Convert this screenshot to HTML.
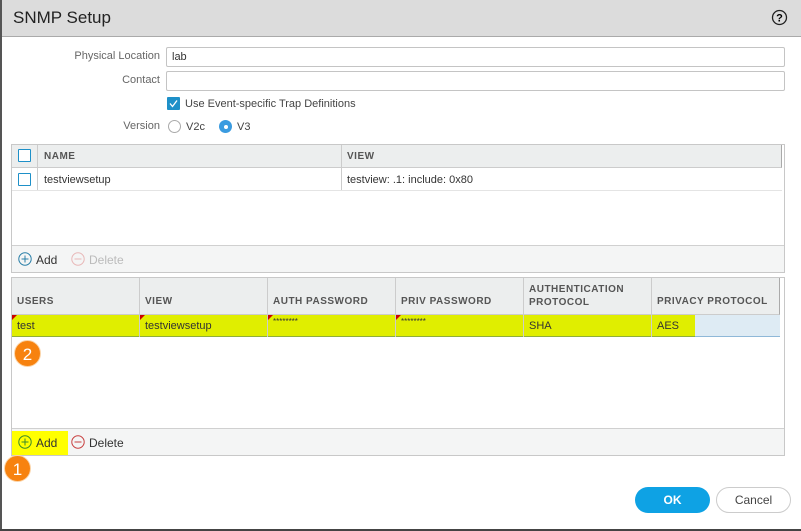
<!DOCTYPE html>
<html><head><meta charset="utf-8"><style>
*{box-sizing:border-box;margin:0;padding:0}
body{width:801px;height:531px;position:relative;overflow:hidden;background:#fff;font-family:"Liberation Sans",sans-serif;font-size:11px;color:#333}
.a{position:absolute}
.lbl{position:absolute;color:#666;font-size:11px;text-align:right;width:150px;left:10px}
.inp{position:absolute;left:166px;width:619px;height:20px;border:1px solid #c4c4c4;border-radius:2px;padding:3px 5px;font-size:11px}
.th{position:absolute;font-size:10px;font-weight:bold;color:#555;letter-spacing:.5px}
.cb{position:absolute;width:13px;height:13px;border:1.5px solid #1e90c8;border-radius:1px;background:#fff}
.vl{position:absolute;width:1px;background:#ccc}
.badge{position:absolute;width:27px;height:27px;border-radius:50%;background:#f7820f;color:#fff;font-size:17px;text-align:center;line-height:27px;border:1px solid #fbd4a8}
</style></head><body>
<div class="a" style="left:0;top:0;width:801px;height:37px;background:#dcdcdc;border-bottom:1px solid #aaa"></div>
<div class="a" style="left:0;top:0;width:2px;height:531px;background:#555"></div>
<div class="a" style="left:0;top:529px;width:801px;height:2px;background:#444"></div>
<div class="a" style="left:13px;top:8px;font-size:17px;color:#222">SNMP Setup</div>
<svg class="a" style="left:771px;top:9px" width="17" height="17"><circle cx="8.5" cy="8.5" r="7" fill="none" stroke="#222" stroke-width="1.3"/><text x="8.5" y="12.5" font-size="11" font-weight="bold" text-anchor="middle" font-family="Liberation Sans">?</text></svg>

<div class="lbl" style="top:50px">Physical Location</div>
<div class="inp" style="top:47px">lab</div>
<div class="lbl" style="top:74px">Contact</div>
<div class="inp" style="top:71px"></div>
<div class="a" style="left:167px;top:97px;width:13px;height:13px;background:#1e90c8;border-radius:1px"><svg width="13" height="13"><path d="M3 6.5l2.5 3 4.5-6" stroke="#fff" stroke-width="1.3" fill="none"/></svg></div>
<div class="a" style="left:185px;top:98px;color:#444">Use Event-specific Trap Definitions</div>
<div class="lbl" style="top:120px">Version</div>
<div class="a" style="left:168px;top:120px;width:13px;height:13px;border:1px solid #aaa;border-radius:50%"></div>
<div class="a" style="left:186px;top:121px;color:#444">V2c</div>
<div class="a" style="left:219px;top:120px;width:13px;height:13px;background:#3a9be0;border-radius:50%"><div style="position:absolute;left:4.5px;top:4.5px;width:4px;height:4px;background:#fff;border-radius:50%"></div></div>
<div class="a" style="left:237px;top:121px;color:#444">V3</div>

<!-- table 1 -->
<div class="a" style="left:11px;top:144px;width:774px;height:129px;border:1px solid #c8c8c8"></div>
<div class="a" style="left:12px;top:145px;width:770px;height:23px;background:#eceeee;border-bottom:1px solid #ccc;border-right:1px solid #aaa"></div>
<div class="vl" style="left:37px;top:145px;height:46px"></div>
<div class="vl" style="left:341px;top:145px;height:46px"></div>
<div class="a" style="left:12px;top:190px;width:770px;height:1px;background:#e4e4e4"></div>
<div class="cb" style="left:18px;top:149px"></div>
<div class="th" style="left:44px;top:151px">NAME</div>
<div class="th" style="left:347px;top:151px">VIEW</div>
<div class="cb" style="left:18px;top:173px"></div>
<div class="a" style="left:44px;top:174px">testviewsetup</div>
<div class="a" style="left:347px;top:174px">testview: .1: include: 0x80</div>
<div class="a" style="left:12px;top:245px;width:772px;height:27px;background:#f4f5f5;border-top:1px solid #d0d0d0"></div>
<svg class="a" style="left:18px;top:252px" width="14" height="14"><circle cx="7" cy="7" r="6.2" fill="none" stroke="#2a7fa8" stroke-width="1"/><path d="M7 3.5v7M3.5 7h7" stroke="#2a7fa8"/></svg>
<div class="a" style="left:36px;top:253px;font-size:12px">Add</div>
<svg class="a" style="left:71px;top:252px" width="14" height="14"><circle cx="7" cy="7" r="6.2" fill="none" stroke="#e8b8b8" stroke-width="1"/><path d="M3.5 7h7" stroke="#e8b8b8"/></svg>
<div class="a" style="left:89px;top:253px;font-size:12px;color:#bbb">Delete</div>

<!-- table 2 -->
<div class="a" style="left:11px;top:277px;width:774px;height:179px;border:1px solid #c8c8c8"></div>
<div class="a" style="left:12px;top:278px;width:768px;height:37px;background:#eceeee;border-bottom:1px solid #ccc;border-right:1px solid #aaa"></div>
<div class="a" style="left:12px;top:315px;width:683px;height:22px;background:#e0ee00;border-bottom:1px solid #8fae3a"></div>
<div class="a" style="left:695px;top:315px;width:85px;height:22px;background:#deebf4;border-bottom:1px solid #8fb8d8"></div>
<div class="vl" style="left:139px;top:278px;height:59px"></div>
<div class="vl" style="left:267px;top:278px;height:59px"></div>
<div class="vl" style="left:395px;top:278px;height:59px"></div>
<div class="vl" style="left:523px;top:278px;height:59px"></div>
<div class="vl" style="left:651px;top:278px;height:59px"></div>
<div class="th" style="left:17px;top:296px">USERS</div>
<div class="th" style="left:145px;top:296px">VIEW</div>
<div class="th" style="left:273px;top:296px">AUTH PASSWORD</div>
<div class="th" style="left:401px;top:296px">PRIV PASSWORD</div>
<div class="th" style="left:529px;top:283px;line-height:13px">AUTHENTICATION<br>PROTOCOL</div>
<div class="th" style="left:657px;top:296px">PRIVACY PROTOCOL</div>
<svg class="a" style="left:12px;top:315px" width="6" height="6"><path d="M0 0h5L0 5z" fill="#c00"/></svg>
<svg class="a" style="left:140px;top:315px" width="6" height="6"><path d="M0 0h5L0 5z" fill="#c00"/></svg>
<svg class="a" style="left:268px;top:315px" width="6" height="6"><path d="M0 0h5L0 5z" fill="#c00"/></svg>
<svg class="a" style="left:396px;top:315px" width="6" height="6"><path d="M0 0h5L0 5z" fill="#c00"/></svg>
<div class="a" style="left:17px;top:320px">test</div>
<div class="a" style="left:145px;top:320px">testviewsetup</div>
<div class="a" style="left:273px;top:317px;font-size:8px">********</div>
<div class="a" style="left:401px;top:317px;font-size:8px">********</div>
<div class="a" style="left:529px;top:320px">SHA</div>
<div class="a" style="left:657px;top:320px">AES</div>
<div class="a" style="left:12px;top:428px;width:772px;height:27px;background:#f4f5f5;border-top:1px solid #d0d0d0"></div>
<div class="a" style="left:12px;top:431px;width:56px;height:24px;background:#ffff00"></div>
<svg class="a" style="left:18px;top:435px" width="14" height="14"><circle cx="7" cy="7" r="6.2" fill="none" stroke="#3a8a2a" stroke-width="1"/><path d="M7 3.5v7M3.5 7h7" stroke="#3a8a2a"/></svg>
<div class="a" style="left:36px;top:436px;font-size:12px">Add</div>
<svg class="a" style="left:71px;top:435px" width="14" height="14"><circle cx="7" cy="7" r="6.2" fill="none" stroke="#c84040" stroke-width="1"/><path d="M3.5 7h7" stroke="#c84040"/></svg>
<div class="a" style="left:89px;top:436px;font-size:12px">Delete</div>
<div class="badge" style="left:14px;top:340px">2</div>
<div class="badge" style="left:4px;top:455px">1</div>

<div class="a" style="left:635px;top:487px;width:75px;height:26px;background:#0ea2e4;border-radius:13px;color:#fff;font-weight:bold;font-size:12px;text-align:center;line-height:26px">OK</div>
<div class="a" style="left:716px;top:487px;width:75px;height:26px;border:1px solid #ccc;border-radius:13px;color:#444;font-size:12px;text-align:center;line-height:24px">Cancel</div>
</body></html>
